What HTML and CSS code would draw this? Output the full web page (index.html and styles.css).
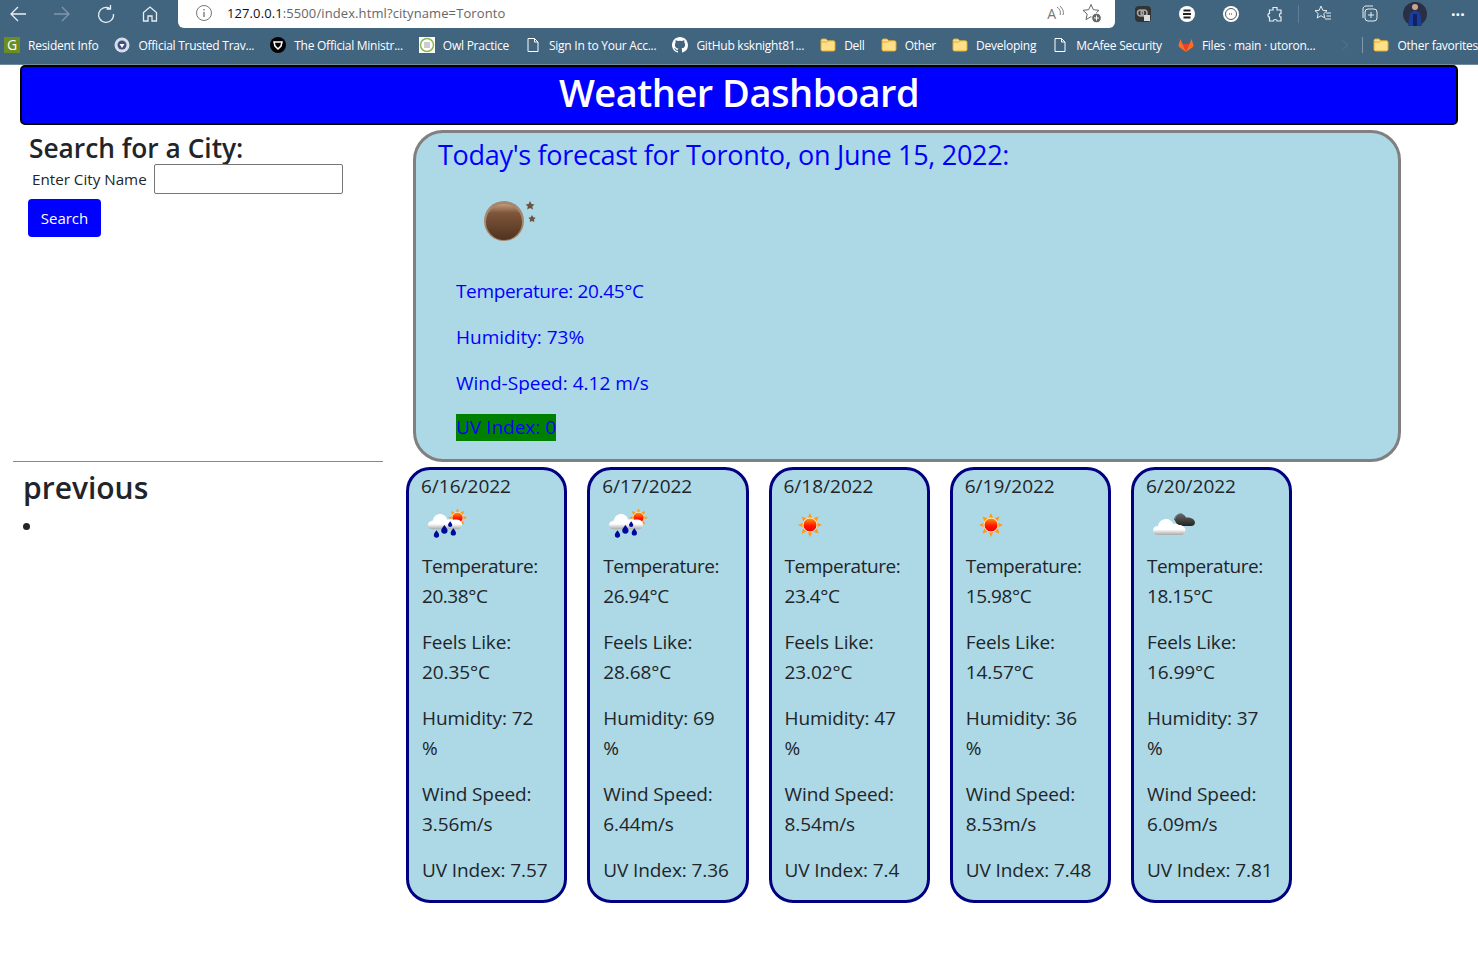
FILE: index.html
```html
<!DOCTYPE html>
<html lang="en">
<head>
  <meta charset="UTF-8">
  <meta name="viewport" content="width=device-width, initial-scale=1.0">
  <title>Weather Dashboard</title>
  <link rel="stylesheet" href="styles.css">
</head>
<body>
  <svg class="defs" width="0" height="0" aria-hidden="true">
    <defs>
      <linearGradient id="sunFill" x1="0" y1="0" x2="0" y2="1"><stop offset="0" stop-color="#ffa000"/><stop offset="0.55" stop-color="#ff1500"/><stop offset="1" stop-color="#f00000"/></linearGradient>
      <linearGradient id="cloudFill" x1="0" y1="0" x2="0" y2="1"><stop offset="0" stop-color="#fff"/><stop offset="0.65" stop-color="#fff"/><stop offset="1" stop-color="#a9a9a9"/></linearGradient>
      <linearGradient id="darkFill" x1="0" y1="0" x2="0" y2="1"><stop offset="0" stop-color="#666"/><stop offset="1" stop-color="#222"/></linearGradient>
      <linearGradient id="moonFill" x1="0" y1="0" x2="0" y2="1"><stop offset="0" stop-color="#c49a7c"/><stop offset="0.25" stop-color="#7d553a"/><stop offset="1" stop-color="#50331f"/></linearGradient>
      <symbol id="folder" viewBox="0 0 16 16"><path d="M1 3.500C1 2.700 1.600 2 2.500 2h3.500l2 1.800h5.500c.8 0 1.500.7 1.500 1.500v7.200c0 .8-.7 1.500-1.500 1.500h-11c-.8 0-1.500-.7-1.500-1.500z" fill="#ffe08a" stroke="#e3ab2a"/><path d="M1 5h5.500L8 3.800" fill="none" stroke="#e3ab2a"/></symbol>
      <symbol id="page" viewBox="0 0 16 16"><path d="M3 1.500h6.500L13 5v9.500H3zM9.500 1.500V5H13" fill="none" stroke="#fff"/></symbol>
      <symbol id="sun" viewBox="0 0 24 24">
        <path d="M12 0l2.200 5h-4.400zM12 24l-2.200-5h4.400zM0 12l5-2.200v4.400zM24 12l-5 2.200v-4.400zM3.500 3.500l5 1.800-3.200 3.200zM20.500 20.500l-5-1.800 3.200-3.200zM20.500 3.500l-1.800 5-3.200-3.200zM3.500 20.500l1.800-5 3.200 3.200z" fill="#ff9a10"/>
        <circle cx="12" cy="12" r="7" fill="url(#sunFill)" stroke="#fff1d0" stroke-width="1"/>
      </symbol>
      <symbol id="rain" viewBox="0 0 38 30">
        <use href="#sun" x="20" y="0" width="18" height="18"/>
        <path d="M5 20c-3 0-4-2-4-4 0-3 3-4 4.500-4C6 8 9 5.500 12.500 5.500c3.500 0 6 2.500 6.800 5.500 1-.7 5-.7 6 0 2-.6 8-.5 8 4.500 0 3-2 4.500-4 4.500z" fill="url(#cloudFill)"/>
        <path d="M9 21c-2 2.500-2.500 3.500-2.500 4.500a2.500 2.500 0 0 0 5 0C11.500 24.500 11 23.500 9 21zM16.500 16c-2.200 3-3 4-3 5.200a3 3 0 0 0 6 0c0-1.200-.8-2.200-3-5.200zM25 19c-2 2.500-2.500 3.500-2.500 4.500a2.500 2.500 0 0 0 5 0c0-1-.5-2-2.500-4.500zM22 12.500c-1.300 1.800-2 2.600-2 3.400a2 2 0 0 0 4 0c0-.8-.7-1.600-2-3.400z" fill="#00089c"/>
      </symbol>
      <symbol id="clouds" viewBox="0 0 44 26">
        <path d="M22 8c1-4 5-6 8-5 2 .5 3.500 2 4 3.500C38 6 43 8 43 11.500c0 2.500-2 3.500-4 3.500H26z" fill="url(#darkFill)"/>
        <path d="M23 8c.5-3 3.500-6 7-5.500" fill="none" stroke="#8a8a8a"/>
        <path d="M6 24c-3 0-5-2-5-4.500S3 15 6 15c.5-4 4-7 8-7 3.500 0 6 2 7.500 5 1-.5 4-.5 5.500 1 3-.5 6.500 2 6.500 5.500 0 2.500-2 4.500-5 4.500z" fill="url(#cloudFill)"/>
      </symbol>
    </defs>
  </svg>

  <div class="browser">
    <div class="toolbar">
      <svg class="tool" width="20" height="20" viewBox="0 0 20 20"><path d="M18 10H3M10 3l-7 7 7 7" fill="none" stroke="#e8eef2" stroke-width="1.300"/></svg>
      <svg class="tool" width="20" height="20" viewBox="0 0 20 20"><path d="M2 10h15M10 3l7 7-7 7" fill="none" stroke="#7f98aa" stroke-width="1.300"/></svg>
      <svg class="tool" width="20" height="20" viewBox="0 0 20 20"><path d="M14 4.500A7.500 7.500 0 1 0 17.500 10M14.500 1v4h-4" fill="none" stroke="#e8eef2" stroke-width="1.300"/></svg>
      <svg class="tool" width="20" height="20" viewBox="0 0 20 20"><path d="M3.500 8.500L10 3l6.500 5.500V17H12v-5H8v5H3.500z" fill="none" stroke="#e8eef2" stroke-width="1.300"/></svg>
      <div class="address">
        <svg width="18" height="18" viewBox="0 0 18 18"><circle cx="9" cy="9" r="7.500" fill="none" stroke="#777"/><path d="M9 8v5M9 5v1.500" stroke="#666" stroke-width="1.200"/></svg>
        <span class="url"><span class="host">127.0.0.1</span>:5500/index.html?cityname=Toronto</span>
        <span class="read">A<svg width="9" height="14" viewBox="0 0 9 14"><path d="M1 1c3 2 4 5 3 8M4 0c3 3 4 6 3 9" fill="none" stroke="#777"/></svg></span>
        <svg width="22" height="22" viewBox="0 0 22 22"><path d="M10 2.500l2.300 5.200 5.700.6-4.200 3.800 1.200 5.500-5-2.900-5 2.900 1.200-5.500L2 8.300l5.700-.6z" fill="none" stroke="#666"/><circle cx="15.500" cy="16" r="4.800" fill="#666" stroke="#fff"/><path d="M13 16h5M15.500 13.500v5" stroke="#fff"/></svg>
      </div>
      <div class="extensions">
        <svg width="18" height="18" viewBox="0 0 18 18"><rect x="1" y="1" width="16" height="16" rx="4" fill="#333"/><circle cx="6.500" cy="8" r="3" fill="none" stroke="#aaa" stroke-width="1.500"/><circle cx="10" cy="8" r="3" fill="none" stroke="#aaa" stroke-width="1.500"/><rect x="10" y="10" width="6" height="6" fill="#ddd"/></svg>
        <svg width="18" height="18" viewBox="0 0 18 18"><circle cx="9" cy="9" r="8" fill="#fff"/><path d="M5.500 5.500h7M5 9h8M5.500 12.500h7" stroke="#222" stroke-width="1.800"/></svg>
        <svg width="18" height="18" viewBox="0 0 18 18"><circle cx="9" cy="9" r="8" fill="#fff"/><circle cx="9" cy="9" r="5.500" fill="none" stroke="#555"/><path d="M7 9h4" stroke="#333" stroke-dasharray="1 1"/></svg>
        <svg width="18" height="18" viewBox="0 0 18 18"><path d="M7 2.500h4v2.500h4v3.500c-2-.5-2 4 0 3.500V16h-4c.5-2-4-2-3.500 0H3.500v-4c-2 .5-2-4 0-3.500V5H7z" fill="none" stroke="#e8eef2" stroke-width="1.200"/></svg>
        <span class="divider"></span>
        <svg width="20" height="20" viewBox="0 0 20 20"><path d="M8 2l1.800 4.300 4.200.4-3.200 2.900 1 4.400L8 11.700 4.200 14l1-4.400L2 6.700l4.200-.4zM13 9h5M13.500 12h4.500M12 15h6" fill="none" stroke="#e8eef2"/></svg>
        <svg width="20" height="20" viewBox="0 0 20 20"><rect x="6" y="5" width="12" height="12" rx="3" fill="none" stroke="#e8eef2"/><path d="M4 14V5c0-1.500 1-3 3-3h7M12 8v6M9 11h6" fill="none" stroke="#e8eef2"/></svg>
        <svg class="avatar" width="24" height="24" viewBox="0 0 24 24"><circle cx="12" cy="12" r="12" fill="#2a2f45"/><path d="M5 24l2-13 5-3 5 3 2 13z" fill="#1c3c9c"/><circle cx="12" cy="5" r="3" fill="#caa58c"/><path d="M10 12h4v12h-4z" fill="#0f2363"/></svg>
        <span class="more">···</span>
      </div>
    </div>
    <div class="bookmarks">
      <a class="mark"><span class="g-icon">G</span>Resident Info</a>
      <a class="mark"><svg width="16" height="16" viewBox="0 0 16 16"><circle cx="8" cy="8" r="7.500" fill="#d8dde6"/><circle cx="8" cy="8" r="4.500" fill="#3d4f86"/><path d="M5.500 7l2.500 4 2.500-4z" fill="#fff"/></svg>Official Trusted Trav...</a>
      <a class="mark"><svg width="16" height="16" viewBox="0 0 16 16"><circle cx="8" cy="8" r="8" fill="#000"/><path d="M4 5h8l-1 4-3 3-3-3z" fill="none" stroke="#fff" stroke-width="1.500"/></svg>The Official Ministr...</a>
      <a class="mark"><svg width="16" height="16" viewBox="0 0 16 16"><rect width="16" height="16" fill="#fff"/><circle cx="8" cy="8" r="6.500" fill="none" stroke="#8bb850" stroke-width="1.500"/><path d="M5 6h6M5 8h6M5 10h6" stroke="#999"/></svg>Owl Practice</a>
      <a class="mark"><svg width="16" height="16"><use href="#page"/></svg>Sign In to Your Acc...</a>
      <a class="mark"><svg width="16" height="16" viewBox="0 0 16 16"><path d="M8 0C3.600 0 0 3.600 0 8c0 3.500 2.300 6.500 5.500 7.600.4.100.5-.2.500-.4v-1.400c-2.200.5-2.700-1-2.700-1-.4-.9-.9-1.200-.9-1.200-.7-.5.100-.5.100-.5.800.1 1.200.8 1.200.8.700 1.200 1.900.9 2.300.7.100-.5.300-.9.500-1.100-1.800-.2-3.600-.9-3.600-4 0-.9.300-1.600.8-2.100-.1-.2-.4-1 .1-2.100 0 0 .7-.2 2.200.8a7.600 7.600 0 0 1 4 0c1.500-1 2.200-.8 2.200-.8.400 1.100.2 1.900.1 2.100.5.600.8 1.300.8 2.100 0 3.100-1.900 3.700-3.600 3.900.3.200.5.700.5 1.500v2.200c0 .2.100.5.600.4A8 8 0 0 0 16 8c0-4.400-3.600-8-8-8z" fill="#fff"/></svg>GitHub ksknight81...</a>
      <a class="mark"><svg width="16" height="16"><use href="#folder"/></svg>Dell</a>
      <a class="mark"><svg width="16" height="16"><use href="#folder"/></svg>Other</a>
      <a class="mark"><svg width="16" height="16"><use href="#folder"/></svg>Developing</a>
      <a class="mark"><svg width="16" height="16"><use href="#page"/></svg>McAfee Security</a>
      <a class="mark"><svg width="16" height="16" viewBox="0 0 16 16"><path d="M8 15L1 10l-.500-2L2.500 2 4.500 7h7l2-5L15.500 8l-.5 2z" fill="#fc6d26"/><path d="M8 15L4.500 7h7z" fill="#e24329"/></svg>Files · main · utoron...</a>
      <svg class="chevron" width="8" height="14" viewBox="0 0 8 14"><path d="M1 1l6 6-6 6" fill="none" stroke="#5f7d94"/></svg>
      <span class="mark-divider"></span>
      <a class="mark"><svg width="16" height="16"><use href="#folder"/></svg>Other favorites</a>
    </div>
  </div>

  <header class="page-title"><h1>Weather Dashboard</h1></header>

  <main class="dashboard">
    <section class="search">
      <h2>Search for a City:</h2>
      <form class="search-form">
        <div class="field">
          <label for="cityname">Enter City Name</label>
          <input type="text" id="cityname">
        </div>
        <button type="button">Search</button>
      </form>
    </section>

    <section class="today">
      <h3>Today's forecast for Toronto, on June 15, 2022:</h3>
      <svg class="today-icon" width="60" height="60" viewBox="0 0 60 60">
        <circle cx="27" cy="31" r="20" fill="#a58770"/>
        <circle cx="27" cy="32" r="18" fill="url(#moonFill)"/>
        <path d="M53 11l1.500 3 3 .5-2.200 2 .7 3-3-1.500-2.800 1.500.6-3-2.200-2 3-.5zM55 25l1.300 2.200 2.400.5-1.700 1.800.3 2.400-2.300-1-2.200 1 .3-2.400-1.700-1.800 2.400-.5z" fill="#6e5240"/>
      </svg>
      <p>Temperature: 20.45°C</p>
      <p>Humidity: 73%</p>
      <p>Wind-Speed: 4.12 m/s</p>
      <p class="uv">UV Index: 0</p>
    </section>

    <section class="history">
      <h2>previous</h2>
      <ul><li></li></ul>
    </section>

    <section class="forecast">
      <article class="day">
        <h4>6/16/2022</h4>
        <svg class="day-icon" width="40" height="32"><use href="#rain"/></svg>
        <p>Temperature: 20.38°C</p>
        <p>Feels Like: 20.35°C</p>
        <p>Humidity: 72 %</p>
        <p>Wind Speed: 3.56m/s</p>
        <p>UV Index: 7.57</p>
      </article>
      <article class="day">
        <h4>6/17/2022</h4>
        <svg class="day-icon" width="40" height="32"><use href="#rain"/></svg>
        <p>Temperature: 26.94°C</p>
        <p>Feels Like: 28.68°C</p>
        <p>Humidity: 69 %</p>
        <p>Wind Speed: 6.44m/s</p>
        <p>UV Index: 7.36</p>
      </article>
      <article class="day">
        <h4>6/18/2022</h4>
        <svg class="day-icon sunny" width="24" height="24"><use href="#sun"/></svg>
        <p>Temperature: 23.4°C</p>
        <p>Feels Like: 23.02°C</p>
        <p>Humidity: 47 %</p>
        <p>Wind Speed: 8.54m/s</p>
        <p>UV Index: 7.4</p>
      </article>
      <article class="day">
        <h4>6/19/2022</h4>
        <svg class="day-icon sunny" width="24" height="24"><use href="#sun"/></svg>
        <p>Temperature: 15.98°C</p>
        <p>Feels Like: 14.57°C</p>
        <p>Humidity: 36 %</p>
        <p>Wind Speed: 8.53m/s</p>
        <p>UV Index: 7.48</p>
      </article>
      <article class="day">
        <h4>6/20/2022</h4>
        <svg class="day-icon cloudy" width="44" height="26"><use href="#clouds"/></svg>
        <p>Temperature: 18.15°C</p>
        <p>Feels Like: 16.99°C</p>
        <p>Humidity: 37 %</p>
        <p>Wind Speed: 6.09m/s</p>
        <p>UV Index: 7.81</p>
      </article>
    </section>
  </main>
</body>
</html>
```

FILE: styles.css
```css
* {
  box-sizing: border-box;
}
body {
  margin: 0;
  font-family: "Open Sans", "Noto Sans", Arial, sans-serif;
  color: #212529;
  background: #fff;
  overflow: hidden;
}
.defs {
  position: absolute;
}

/* browser bar */
.browser {
  height: 65px;
  background: #41647f;
  border-bottom: 1px solid #6f8ba0;
  color: #fff;
}
.toolbar {
  display: flex;
  align-items: center;
  height: 28px;
  padding-left: 8px;
}
.tool {
  margin-right: 24px;
  flex: none;
}
.toolbar .tool:nth-child(4) {
  margin-right: 18px;
}
.address {
  display: flex;
  align-items: center;
  width: 937px;
  height: 28px;
  padding: 0 12px 2px 17px;
  background: #fff;
  border-radius: 0 0 6px 6px;
  color: #666;
  font-size: 13px;
}
.url {
  margin-left: 14px;
  flex: 1;
  letter-spacing: 0.1px;
}
.host {
  color: #111;
}
.read {
  display: flex;
  align-items: center;
  margin-right: 16px;
  font-size: 14px;
  color: #777;
}
.extensions {
  display: flex;
  align-items: center;
  margin-left: 19px;
  gap: 26px;
}
.divider {
  width: 1px;
  height: 18px;
  margin: 0 -12px;
  background: #5f7d94;
}
.avatar {
  margin: 0 0 0 -2px;
}
.more {
  margin-left: -2px;
  font-size: 16px;
  font-weight: 700;
}
.bookmarks {
  display: flex;
  align-items: center;
  gap: 16px;
  height: 34px;
  padding-left: 4px;
  white-space: nowrap;
}
.mark {
  display: flex;
  align-items: center;
  gap: 8px;
  font-size: 12px;
  letter-spacing: -0.25px;
}
.g-icon {
  width: 16px;
  height: 16px;
  background: #6b8e23;
  color: #fff;
  font-size: 14px;
  line-height: 16px;
  text-align: center;
}
.chevron {
  margin-left: 11px;
}
.mark-divider {
  width: 1px;
  height: 16px;
  margin-left: -3px;
  margin-right: -5px;
  background: #7f98aa;
}

/* page */
.page-title {
  margin: 0 20px;
  height: 60px;
  background: #0000ff;
  border: 2px solid #000;
  border-radius: 5px;
  text-align: center;
}
.page-title h1 {
  margin: 0;
  color: #fff;
  font-size: 38px;
  font-weight: 600;
  letter-spacing: -0.5px;
  line-height: 50px;
}
.dashboard {
  display: grid;
  grid-template-columns: 406px 1fr;
  grid-template-rows: 337px auto;
}
.search {
  padding: 6px 0 0 28px;
}
.search h2 {
  margin: 0 0 -1px 1px;
  font-size: 26.300px;
  font-weight: 600;
  line-height: 34px;
}
.field {
  display: flex;
  align-items: center;
  gap: 7px;
  padding-left: 4px;
  font-size: 15.200px;
}
.field input {
  width: 189px;
  height: 30px;
  border: 1px solid #767676;
  border-radius: 2px;
}
.search button {
  display: block;
  margin-top: 5px;
  width: 73px;
  height: 38px;
  padding: 0;
  background: #0000ff;
  color: #fff;
  border: 0;
  border-radius: 4px;
  font-family: inherit;
  font-size: 15px;
}
.today {
  margin: 5px 0 0 7px;
  width: 988px;
  height: 332px;
  padding: 0 0 0 22px;
  background: lightblue;
  border: 3px solid #808080;
  border-radius: 30px;
  color: #0000ff;
}
.today h3 {
  margin: 0;
  padding-top: 2px;
  font-size: 27px;
  font-weight: 400;
  letter-spacing: -0.3px;
  line-height: 40px;
}
.today-icon {
  display: block;
  margin: 15px 0 0 39px;
}
.today p {
  width: max-content;
  margin: 0 0 16px 18px;
  font-size: 19px;
  line-height: 30px;
}
.today p:first-of-type {
  margin-top: 26px;
  letter-spacing: -0.35px;
}
.today .uv {
  margin-top: 0;
  background: #008000;
  line-height: 27px;
}
.history {
  border-top: 1px solid #888;
  margin: -1px 0 0 13px;
  width: 370px;
  height: max-content;
  padding-left: 10px;
}
.history h2 {
  margin: 4px 0 0;
  font-size: 30px;
  font-weight: 600;
  line-height: 44px;
}
.history ul {
  margin: 2px 0 0;
  padding: 0;
  list-style-position: inside;
  font-size: 20px;
  line-height: 30px;
}
.forecast {
  display: flex;
  gap: 20px;
  padding-top: 5px;
}
.day {
  width: 161.250px;
  height: 436px;
  padding: 1px 14px 0 13px;
  background: lightblue;
  border: 3px solid #000080;
  border-radius: 24px;
  font-size: 19px;
  letter-spacing: -0.1px;
  line-height: 30px;
}
.day h4 {
  margin: 0 0 0 -1px;
  font-size: 19px;
  font-weight: 400;
  letter-spacing: 0;
  line-height: 30px;
}
.day p {
  margin: 0 0 16px;
}
.day p:first-of-type {
  letter-spacing: -0.45px;
}
.day-icon {
  display: block;
  margin: 7px 0 11px 5px;
}
.day .sunny {
  margin: 12px 0 14px 13px;
}
.day .cloudy {
  margin: 10px 0 14px 5px;
}
```
